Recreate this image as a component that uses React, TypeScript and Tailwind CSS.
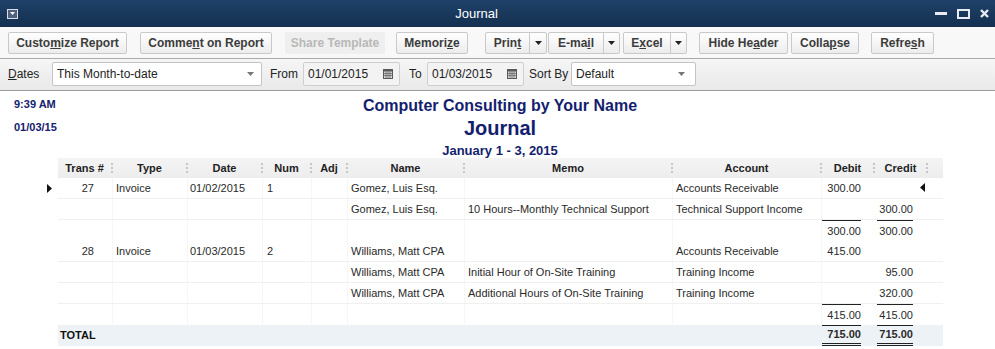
import React from 'react';

const font = { fontFamily: '"Liberation Sans", Arial, sans-serif' };

function Caret() {
    return (
        <svg width="7" height="4" viewBox="0 0 7 4" className="shrink-0">
            <path d="M0 0h7L3.5 4z" fill="#222" />
        </svg>
    );
}

function Calendar() {
    return (
        <svg width="10" height="10" viewBox="0 0 10 10" className="shrink-0">
            <rect x="0" y="0" width="10" height="10" fill="#5a5a5a" />
            <rect x="1" y="2.5" width="8" height="6.5" fill="#d8d8d8" />
            <path d="M1 4.5h8M1 6.5h8M3 2.5v6.5M5 2.5v6.5M7 2.5v6.5" stroke="#6a6a6a" strokeWidth="0.8" />
        </svg>
    );
}

function ToolButton({ className, children }: { className: string; children: React.ReactNode }) {
    return (
        <div className={`h-[22px] flex items-center justify-center border border-[#c9c9c9] rounded-[2px] bg-gradient-to-b from-white to-[#ececec] text-[12px] font-bold text-[#3c3c3c] ${className}`}>
            {children}
        </div>
    );
}

function SplitButton({ main, arrow, children }: { main: string; arrow: string; children: React.ReactNode }) {
    return (
        <div className={`h-[22px] flex border border-[#c9c9c9] rounded-[2px] bg-gradient-to-b from-white to-[#ececec] text-[12px] font-bold text-[#3c3c3c] ${main}`}>
            <div className="flex-1 flex items-center justify-center">{children}</div>
            <div className={`flex items-center justify-center border-l border-[#c9c9c9] ${arrow}`}>
                <Caret />
            </div>
        </div>
    );
}

type Row = {
    trans?: string;
    type?: string;
    date?: string;
    num?: string;
    name?: string;
    memo?: string;
    account?: string;
    debit?: string;
    credit?: string;
    kind?: 'line' | 'sub' | 'total';
    marker?: boolean;
};

const rows: Row[] = [
    { trans: '27', type: 'Invoice', date: '01/02/2015', num: '1', name: 'Gomez, Luis Esq.', account: 'Accounts Receivable', debit: '300.00', marker: true },
    { name: 'Gomez, Luis Esq.', memo: '10 Hours--Monthly Technical Support', account: 'Technical Support Income', credit: '300.00' },
    { debit: '300.00', credit: '300.00', kind: 'sub' },
    { trans: '28', type: 'Invoice', date: '01/03/2015', num: '2', name: 'Williams, Matt CPA', account: 'Accounts Receivable', debit: '415.00' },
    { name: 'Williams, Matt CPA', memo: 'Initial Hour of On-Site Training', account: 'Training Income', credit: '95.00' },
    { name: 'Williams, Matt CPA', memo: 'Additional Hours of On-Site Training', account: 'Training Income', credit: '320.00' },
    { debit: '415.00', credit: '415.00', kind: 'sub' },
    { debit: '715.00', credit: '715.00', kind: 'total' },
];

const headers: [string, string][] = [
    ['Trans #', 'w-[55px]'],
    ['Type', 'w-[75px]'],
    ['Date', 'w-[75px]'],
    ['Num', 'w-[49px]'],
    ['Adj', 'w-[36px]'],
    ['Name', 'w-[117px]'],
    ['Memo', 'w-[208px]'],
    ['Account', 'w-[149px]'],
    ['Debit', 'w-[53px]'],
    ['Credit', 'w-[53px]'],
];

function Amount({ value, kind, credit }: { value?: string; kind?: Row['kind']; credit?: boolean }) {
    const pad = credit ? 'pl-[2px] pr-[15px]' : 'pr-[14px]';
    if (!kind || kind === 'line') {
        return <div className={`h-full flex items-center justify-end ${pad}`}>{value}</div>;
    }
    return (
        <div className={`h-full flex ${pad}`}>
            <div
                className={`flex-1 flex items-center justify-end border-t border-[#222] ${
                    kind === 'total' ? 'border-b-[3px] border-double font-bold' : ''
                }`}
            >
                {value}
            </div>
        </div>
    );
}

export default function App() {
    return (
        <div className="w-[995px] h-[349px] bg-white overflow-hidden" style={font}>
            {/* title bar */}
            <div className="h-[27px] flex items-center bg-gradient-to-b from-[#1f4169] to-[#13304f] text-white">
                <div className="w-[30px] pl-[7px] flex items-center">
                    <div className="w-[11px] h-[10px] border border-[#d9dee6] bg-[#51637c] flex items-center justify-center">
                        <svg width="5" height="3" viewBox="0 0 5 3">
                            <path d="M0 0h5L2.5 3z" fill="#fff" />
                        </svg>
                    </div>
                </div>
                <div className="flex-1 text-center text-[13px]">Journal</div>
                <div className="w-[72px] flex items-center gap-[10px] pl-[12px]">
                    <div className="w-[12px] h-[3px] bg-[#e8ecf2]" />
                    <div className="w-[13px] h-[10px] border-2 border-[#e8ecf2]" />
                    <svg width="9" height="9" viewBox="0 0 9 9">
                        <path d="M1 1l7 7M8 1L1 8" stroke="#e8ecf2" strokeWidth="2.4" />
                    </svg>
                </div>
            </div>

            {/* toolbar */}
            <div className="h-[32px] flex items-start pt-[5px] pl-[8px] bg-[#f8f8f8] border-b border-[#aaaaaa]">
                <ToolButton className="w-[119px]">
                    Custo<u>m</u>ize Report
                </ToolButton>
                <ToolButton className="w-[132px] ml-[13px]">
                    Comme<u>n</u>t on Report
                </ToolButton>
                <div className="w-[100px] ml-[13px] h-[22px] flex items-center justify-center bg-[#efefef] rounded-[2px] text-[12px] font-bold text-[#b8b8b8]">
                    Share Template
                </div>
                <ToolButton className="w-[72px] ml-[11px]">
                    Memori<u>z</u>e
                </ToolButton>
                <SplitButton main="w-[62px] ml-[17px]" arrow="w-[17px]">
                    Prin<u>t</u>
                </SplitButton>
                <SplitButton main="w-[72px] ml-[1px]" arrow="w-[16px]">
                    E-ma<u>i</u>l
                </SplitButton>
                <SplitButton main="w-[64px] ml-[3px]" arrow="w-[16px]">
                    E<u>x</u>cel
                </SplitButton>
                <ToolButton className="w-[89px] ml-[12px]">
                    Hide He<u>a</u>der
                </ToolButton>
                <ToolButton className="w-[68px] ml-[3px]">
                    Colla<u>p</u>se
                </ToolButton>
                <ToolButton className="w-[63px] ml-[12px]">
                    Refre<u>s</u>h
                </ToolButton>
            </div>

            {/* filter bar */}
            <div className="h-[32px] flex items-start pt-[3px] pl-[8px] bg-gradient-to-b from-[#f6f6f6] to-[#e9e9e9] border-b border-[#9c9c9c] text-[12px] text-[#222]">
                <div className="h-[24px] flex items-center w-[44px]">
                    <span>
                        <u>D</u>ates
                    </span>
                </div>
                <div className="w-[210px] h-[24px] flex items-center justify-between pl-[4px] pr-[7px] bg-white border border-[#c4c4c4] rounded-[2px]">
                    <span>This Month-to-date</span>
                    <svg width="7" height="4" viewBox="0 0 7 4">
                        <path d="M0 0h7L3.5 4z" fill="#777" />
                    </svg>
                </div>
                <div className="h-[24px] flex items-center ml-[8px] w-[33px]">From</div>
                <div className="w-[97px] h-[24px] flex items-center justify-between pl-[4px] pr-[6px] bg-[#f3f3f3] border border-[#cfcfcf] rounded-[2px]">
                    <span>01/01/2015</span>
                    <Calendar />
                </div>
                <div className="h-[24px] flex items-center ml-[9px] w-[18px]">To</div>
                <div className="w-[97px] h-[24px] flex items-center justify-between pl-[4px] pr-[6px] bg-[#f3f3f3] border border-[#cfcfcf] rounded-[2px]">
                    <span>01/03/2015</span>
                    <Calendar />
                </div>
                <div className="h-[24px] flex items-center ml-[5px] w-[42px]">Sort By</div>
                <div className="w-[125px] h-[24px] flex items-center justify-between pl-[4px] pr-[10px] bg-white border border-[#c4c4c4] rounded-[2px]">
                    <span>Default</span>
                    <svg width="7" height="4" viewBox="0 0 7 4">
                        <path d="M0 0h7L3.5 4z" fill="#777" />
                    </svg>
                </div>
            </div>

            {/* report */}
            <div className="pt-[5px]">
                <div className="flex">
                    <div className="w-[80px] pl-[14px] pt-[1px] text-[11px] leading-[14px] font-bold text-[#14206e]">
                        <div>9:39 AM</div>
                        <div className="mt-[9px]">01/03/15</div>
                    </div>
                    <div className="flex-1 flex flex-col items-center font-bold text-[#141e6e]">
                        <div className="text-[16px] leading-[20px]">Computer Consulting by Your Name</div>
                        <div className="text-[20px] leading-[24px]">Journal</div>
                        <div className="text-[13px] leading-[15px] mt-[3px]">January 1 - 3, 2015</div>
                    </div>
                    <div className="w-[75px]" />
                </div>

                {/* column header */}
                <div className="ml-[58px] w-[885px] h-[20px] flex bg-gradient-to-b from-[#f4f4f4] to-[#ededed] text-[11px] font-bold text-[#222]">
                    {headers.map(([label, w]) => (
                        <div key={label} className={`${w} flex items-center`}>
                            <div className="flex-1 text-center">{label}</div>
                            <div className="h-[10px] border-l-2 border-dotted border-[#c6c6c6]" />
                        </div>
                    ))}
                </div>

                {/* rows */}
                {rows.map((r, i) => (
                    <div key={i} className="flex h-[21px] text-[11px] text-[#2a2a2a]">
                        <div className="w-[58px] flex items-center justify-end pr-[6px]">
                            {r.marker && (
                                <svg width="5" height="9" viewBox="0 0 5 9">
                                    <path d="M0 0l5 4.5L0 9z" fill="#111" />
                                </svg>
                            )}
                        </div>
                        <div
                            className={`w-[885px] flex ${
                                r.kind === 'total' ? 'bg-[#edf2f7]' : r.kind === 'sub' ? '' : 'border-b border-[#f0f0f0]'
                            }`}
                        >
                            {r.kind === 'total' ? (
                                <div className="w-[764px] flex items-center pl-[2px] font-bold text-[#111]">TOTAL</div>
                            ) : (
                                <>
                                    <div className="w-[55px] flex items-center justify-end pr-[18px] border-r border-[#f6f6f6]">{r.trans}</div>
                                    <div className="w-[75px] flex items-center pl-[3px] border-r border-[#f6f6f6]">{r.type}</div>
                                    <div className="w-[75px] flex items-center pl-[2px] border-r border-[#f6f6f6]">{r.date}</div>
                                    <div className="w-[49px] flex items-center pl-[4px] border-r border-[#f6f6f6]">{r.num}</div>
                                    <div className="w-[36px] border-r border-[#f6f6f6]" />
                                    <div className="w-[117px] flex items-center pl-[3px] border-r border-[#f6f6f6]">{r.name}</div>
                                    <div className="w-[208px] flex items-center pl-[3px] border-r border-[#f6f6f6]">{r.memo}</div>
                                    <div className="w-[149px] flex items-center pl-[3px] border-r border-[#f6f6f6]">{r.account}</div>
                                </>
                            )}
                            <div className="w-[53px]">
                                <Amount value={r.debit} kind={r.kind} />
                            </div>
                            <div className="w-[53px] relative">
                                <Amount value={r.credit} kind={r.kind} credit />
                                {r.marker && (
                                    <svg width="5" height="9" viewBox="0 0 5 9" className="absolute right-[3px] top-[5px]">
                                        <path d="M5 0L0 4.5 5 9z" fill="#111" />
                                    </svg>
                                )}
                            </div>
                            <div className="w-[15px]" />
                        </div>
                    </div>
                ))}
            </div>
        </div>
    );
}
